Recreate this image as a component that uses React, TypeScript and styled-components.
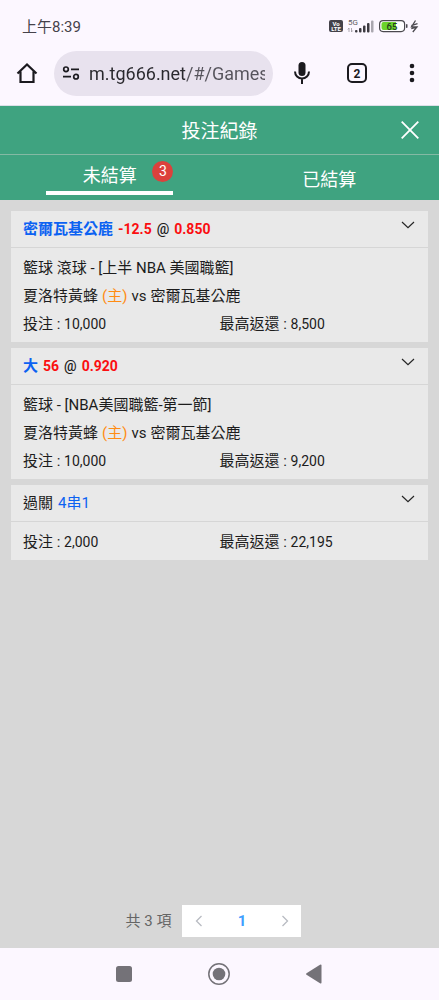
import React from "react";
import styled, { createGlobalStyle } from "styled-components";

const GlobalStyle = createGlobalStyle`
  *, *::before, *::after { box-sizing: border-box; }
  body {
    margin: 0;
    background: #fcf7ff;
    color: #1c1c1c;
    font-family: Roboto, "Noto Sans CJK TC", sans-serif;
    font-size: 15px;
  }
  button, input { font: inherit; color: inherit; border: 0; padding: 0; margin: 0; background: none; }
  button { cursor: pointer; }
  h1, p { margin: 0; font-weight: 400; }
  svg { display: block; }
`;

const Screen = styled.div`
  min-height: 100vh;
  display: flex;
  flex-direction: column;
`;

const StatusBar = styled.div`
  display: flex;
  align-items: center;
  justify-content: space-between;
  height: 51px;
  padding: 0 20px 0 22px;
  color: #45424a;
`;

const StatusIcons = styled.div`
  display: flex;
  align-items: center;
`;

const BrowserBar = styled.div`
  display: flex;
  align-items: center;
  height: 55px;
  padding: 0 16px 10px;
  border-bottom: 1px solid #dcdfe8;
  color: #1b1a1f;
`;

const IconButton = styled.button`
  flex: none;
  display: grid;
  place-items: center;
  width: 22px;
  height: 24px;
`;

const AddressBar = styled.label`
  flex: 1;
  min-width: 0;
  display: flex;
  align-items: center;
  gap: 9px;
  height: 45px;
  margin: 0 18px 0 16px;
  padding: 0 8px;
  border-radius: 23px;
  background: #e8e2ee;
`;

const AddressInput = styled.input`
  flex: 1;
  min-width: 0;
  height: 30px;
  font-size: 18px;
  color: transparent;
  background: linear-gradient(90deg, #29282d 97px, #55535b 97px);
  background-clip: text;
  -webkit-background-clip: text;
  outline: none;
`;

const BrowserActions = styled.div`
  display: flex;
  gap: 33px;
`;

const TitleBar = styled.header`
  display: grid;
  grid-template-columns: 40px 1fr 40px;
  align-items: center;
  height: 49px;
  padding: 0 9px;
  background: #3fa380;
  border-bottom: 1px solid #84b9a4;
  color: #fff;
`;

const Title = styled.h1`
  grid-column: 2;
  padding-top: 3px;
  text-align: center;
  font-size: 19px;
  line-height: 28px;
`;

const CloseButton = styled(IconButton)`
  justify-self: center;
  width: 32px;
`;

const Tabs = styled.div`
  display: grid;
  grid-template-columns: 1fr 1fr;
  height: 45px;
  background: #3fa380;
  color: #fff;
`;

const Tab = styled.button`
  display: flex;
  align-items: center;
  justify-content: center;
  font-size: 18px;
`;

const TabLabel = styled.span<{ $active?: boolean }>`
  position: relative;
  width: 58%;
  padding-top: ${(p) => (p.$active ? "0" : "4px")};
  line-height: 30px;
  border-bottom: ${(p) => (p.$active ? "4px solid #fff" : "0")};
`;

const Badge = styled.span`
  position: absolute;
  top: 0;
  right: 0;
  width: 21px;
  height: 21px;
  border-radius: 50%;
  background: #dc413c;
  font-size: 14px;
  line-height: 21px;
`;

const Content = styled.main`
  flex: 1;
  display: flex;
  flex-direction: column;
  justify-content: space-between;
  padding: 11px;
  background: #d7d7d7;
`;

const BetList = styled.div`
  display: flex;
  flex-direction: column;
  gap: 6px;
`;

const Card = styled.article`
  background: #e9e9e9;
`;

const CardHeader = styled.button`
  display: flex;
  align-items: center;
  gap: 5px;
  width: 100%;
  height: 37px;
  padding: 0 13px 0 12px;
  border-bottom: 1px solid #d6d6d6;
  line-height: 28px;
`;

const Pick = styled.span<{ $bold?: boolean }>`
  color: #0c62f2;
  font-weight: ${(p) => (p.$bold ? 700 : 400)};
`;

const Odds = styled.span`
  color: #fb0e10;
  font-size: 14px;
  font-weight: 700;
`;

const At = styled.span`
  font-size: 14px;
  font-weight: 500;
`;

const Toggle = styled.span`
  align-self: flex-start;
  margin: 10px 0 0 auto;
`;

const CardBody = styled.div`
  padding: 6px 12px 4px;
  line-height: 28px;
`;

const Line = styled.p`
  display: flex;
  gap: 4px;
`;

const Home = styled.span`
  color: #ff8c13;
`;

const Amounts = styled.div`
  display: grid;
  grid-template-columns: 1fr 1fr;
`;

const Figure = styled.span`
  font-size: 14px;
`;

const Pagination = styled.nav`
  display: flex;
  align-items: center;
  justify-content: center;
  gap: 11px;
  padding-right: 12px;
  line-height: 28px;
  color: #656565;
`;

const Pages = styled.div`
  display: grid;
  grid-template-columns: 33px 53px 33px;
  height: 32px;
  background: #fff;
`;

const PageButton = styled.button<{ $current?: boolean }>`
  display: grid;
  place-items: center;
  color: ${(p) => (p.$current ? "#409eff" : "#b8bbc2")};
  font-weight: 700;
`;

const SystemNav = styled.nav`
  display: flex;
  justify-content: center;
  gap: 71px;
  height: 52px;
  padding-right: 2px;
  color: #747278;
`;

const SystemButton = styled(IconButton)`
  width: 24px;
  height: 52px;
`;

type Bet = {
  pick: string;
  label?: string;
  line?: string;
  odds?: string;
  league?: string;
  home?: string;
  away?: string;
  stake: string;
  payout: string;
};

const bets: Bet[] = [
  {
    pick: "密爾瓦基公鹿",
    line: "-12.5",
    odds: "0.850",
    league: "籃球 滾球 - [上半 NBA 美國職籃]",
    home: "夏洛特黃蜂",
    away: "密爾瓦基公鹿",
    stake: "10,000",
    payout: "8,500",
  },
  {
    pick: "大",
    line: "56",
    odds: "0.920",
    league: "籃球 - [NBA美國職籃-第一節]",
    home: "夏洛特黃蜂",
    away: "密爾瓦基公鹿",
    stake: "10,000",
    payout: "9,200",
  },
  { label: "過關", pick: "4串1", stake: "2,000", payout: "22,195" },
];

const BetCard = ({ bet }: { bet: Bet }) => (
  <Card>
    <CardHeader type="button" aria-expanded="true">
      {bet.label && <span>{bet.label}</span>}
      <Pick $bold={!bet.label}>{bet.pick}</Pick>
      {bet.odds && (
        <>
          <Odds>{bet.line}</Odds>
          <At>@</At>
          <Odds>{bet.odds}</Odds>
        </>
      )}
      <Toggle>
        <svg width="14" height="8" viewBox="0 0 14 8" fill="none" stroke="#252525" strokeWidth="1.2">
          <path d="M1 1l6 5.7L13 1" />
        </svg>
      </Toggle>
    </CardHeader>
    <CardBody>
      {bet.league && <Line>{bet.league}</Line>}
      {bet.home && (
        <Line>
          <span>{bet.home}</span>
          <Home>(主)</Home>
          <span>vs</span>
          <span>{bet.away}</span>
        </Line>
      )}
      <Amounts>
        <span>
          投注 : <Figure>{bet.stake}</Figure>
        </span>
        <span>
          最高返還 : <Figure>{bet.payout}</Figure>
        </span>
      </Amounts>
    </CardBody>
  </Card>
);

const SignalIcons = () => (
  <StatusIcons>
    <svg width="90" height="18" viewBox="0 0 90 18" fontFamily="Roboto, sans-serif">
      <rect x="0" y="3" width="14" height="12" rx="2" fill="#444249" />
      <text x="7" y="8.600" fontSize="6" fontWeight="700" fill="#fff" textAnchor="middle">Vo</text>
      <text x="7" y="14" fontSize="6" fontWeight="700" fill="#fff" textAnchor="middle">LTE</text>
      <text x="19" y="8" fontSize="8" fill="#5c5a60">5G</text>
      <path d="M20 15v-4l-1.200 1.500M22.500 11v4l1.200-1.500" stroke="#99969d" strokeWidth=".8" fill="none" />
      <g fill="#3c3a40">
        <rect x="26" y="13" width="2.500" height="2.500" rx="1" />
        <rect x="30" y="11" width="2.500" height="4.500" rx="1" />
        <rect x="34" y="8.500" width="2.500" height="7" rx="1" />
        <rect x="38" y="6" width="2.500" height="9.500" rx="1" />
      </g>
      <rect x="42" y="3.500" width="2.500" height="12" rx="1" fill="#aaa7af" />
      <rect x="50.600" y="3.600" width="25" height="11" rx="3.500" fill="#fff" stroke="#4b494f" strokeWidth="1.200" />
      <path d="M54.500 5H67v8H54.500Q52.500 13 52.500 11V7Q52.500 5 54.500 5Z" fill="#6bd42b" />
      <rect x="77" y="7" width="1.500" height="4" rx=".7" fill="#4b494f" />
      <text x="63" y="12.500" fontSize="9.500" fontWeight="500" fill="#243b1b" textAnchor="middle">65</text>
      <path d="M86.500 3.500L82.500 9.800h5.500L83.800 15M82.300 11.700l6.200-1.900M82.300 8.600l6.200-1.900" stroke="#4b494f" strokeWidth="1.300" fill="none" />
    </svg>
  </StatusIcons>
);

export default function App() {
  return (
    <Screen>
      <GlobalStyle />
      <StatusBar>
        <span>上午8:39</span>
        <SignalIcons />
      </StatusBar>
      <BrowserBar>
        <IconButton type="button" aria-label="首頁">
          <svg width="22" height="22" viewBox="0 0 22 22" fill="none" stroke="currentColor" strokeWidth="2.200">
            <path d="M1.500 11.500L11 2.500l9.500 9M4.500 9.500v10.500h13V9.500" />
          </svg>
        </IconButton>
        <AddressBar>
          <svg width="18" height="14" viewBox="0 0 18 14" fill="none" stroke="currentColor" strokeWidth="1.700">
            <circle cx="4" cy="3.300" r="2.300" />
            <path d="M9 3.300h8M1 10.700h8" />
            <circle cx="14" cy="10.700" r="2.300" />
          </svg>
          <AddressInput type="text" aria-label="網址" defaultValue="m.tg666.net/#/Games" />
        </AddressBar>
        <BrowserActions>
          <IconButton type="button" aria-label="語音搜尋">
            <svg width="18" height="22" viewBox="0 0 18 22">
              <rect x="5.500" y="0" width="7" height="14" rx="3.500" fill="currentColor" />
              <path d="M2 9.500a7 7 0 0 0 14 0M9 16.500V22" fill="none" stroke="currentColor" strokeWidth="2" />
            </svg>
          </IconButton>
          <IconButton type="button" aria-label="分頁">
            <svg width="22" height="22" viewBox="0 0 22 22">
              <rect x="2" y="2" width="18" height="18" rx="4" fill="none" stroke="currentColor" strokeWidth="2" />
              <text x="11" y="15.500" fontSize="12" fontWeight="700" fill="currentColor" textAnchor="middle">2</text>
            </svg>
          </IconButton>
          <IconButton type="button" aria-label="更多">
            <svg width="6" height="20" viewBox="0 0 6 20" fill="currentColor">
              <circle cx="3" cy="3" r="2.300" />
              <circle cx="3" cy="10" r="2.300" />
              <circle cx="3" cy="17" r="2.300" />
            </svg>
          </IconButton>
        </BrowserActions>
      </BrowserBar>
      <TitleBar>
        <Title>投注紀錄</Title>
        <CloseButton type="button" aria-label="關閉">
          <svg width="18" height="18" viewBox="0 0 18 18" fill="none" stroke="currentColor" strokeWidth="1.800">
            <path d="M.7.7l16.600 16.600M17.300.7L.7 17.300" />
          </svg>
        </CloseButton>
      </TitleBar>
      <Tabs role="tablist">
        <Tab type="button" role="tab" aria-selected="true">
          <TabLabel $active>
            未結算<Badge>3</Badge>
          </TabLabel>
        </Tab>
        <Tab type="button" role="tab" aria-selected="false">
          <TabLabel>已結算</TabLabel>
        </Tab>
      </Tabs>
      <Content>
        <BetList>
          {bets.map((bet) => (
            <BetCard key={bet.payout} bet={bet} />
          ))}
        </BetList>
        <Pagination aria-label="分頁">
          <span>共 3 項</span>
          <Pages>
            <PageButton type="button" aria-label="上一頁">
              <svg width="8" height="12" viewBox="0 0 8 12" fill="none" stroke="currentColor" strokeWidth="1.300">
                <path d="M6.500 1L1.500 6l5 5" />
              </svg>
            </PageButton>
            <PageButton type="button" $current aria-current="page">
              1
            </PageButton>
            <PageButton type="button" aria-label="下一頁">
              <svg width="8" height="12" viewBox="0 0 8 12" fill="none" stroke="currentColor" strokeWidth="1.300">
                <path d="M1.500 1l5 5-5 5" />
              </svg>
            </PageButton>
          </Pages>
        </Pagination>
      </Content>
      <SystemNav aria-label="系統導覽">
        <SystemButton type="button" aria-label="最近使用">
          <svg width="16" height="16" viewBox="0 0 16 16" fill="currentColor">
            <rect width="16" height="16" rx="2.500" />
          </svg>
        </SystemButton>
        <SystemButton type="button" aria-label="主畫面">
          <svg width="22" height="22" viewBox="0 0 22 22">
            <circle cx="11" cy="11" r="10.200" fill="none" stroke="currentColor" strokeWidth="1.500" />
            <circle cx="11" cy="11" r="6.300" fill="currentColor" />
          </svg>
        </SystemButton>
        <SystemButton type="button" aria-label="返回">
          <svg width="16" height="20" viewBox="0 0 16 20" fill="currentColor">
            <path d="M.5 9.200Q-.3 10 .5 10.800L14 19.300Q15.500 20 15.500 18.500V1.500Q15.500 0 14 .7Z" />
          </svg>
        </SystemButton>
      </SystemNav>
    </Screen>
  );
}
